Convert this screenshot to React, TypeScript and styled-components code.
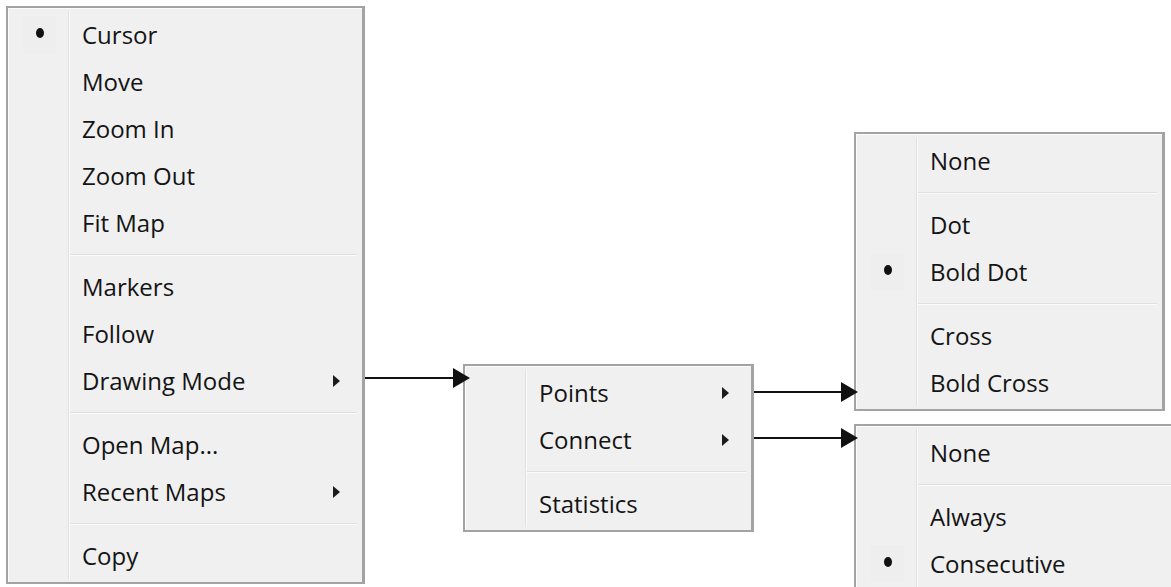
import React from "react";
import styled, { createGlobalStyle } from "styled-components";

const Global = createGlobalStyle`
  html, body { margin: 0; padding: 0; background: #ffffff; overflow: hidden; }
  #root { width: 1171px; height: 587px; }
`;

const Canvas = styled.div`
  position: relative;
  width: 1171px;
  height: 587px;
  overflow: hidden;
  background: #ffffff;
  font-family: "Open Sans", "Noto Sans", sans-serif;
`;

const GUTTER = 57;

const Menu = styled.div<{ $x: number; $y: number; $w: number }>`
  position: absolute;
  left: ${(p) => p.$x}px;
  top: ${(p) => p.$y}px;
  width: ${(p) => p.$w}px;
  box-sizing: border-box;
  background: #f0f0f0;
  border: 2px solid #a3a3a3;
  border-right-width: 3px;
  box-shadow: inset 1px 1px 0 #fbfbfb;
  padding: 3px;
  display: flex;
  flex-direction: column;

  &::before {
    content: "";
    position: absolute;
    left: ${GUTTER + 3}px;
    top: 3px;
    bottom: 3px;
    width: 1px;
    background: #e0e0e0;
    border-right: 1px solid #fbfbfb;
  }
`;

const Row = styled.div`
  display: grid;
  grid-template-columns: ${GUTTER}px 1fr 40px;
  align-items: center;
  height: 47px;
`;

const Check = styled.div<{ $on?: boolean }>`
  display: flex;
  align-items: center;
  justify-content: center;
  width: 33px;
  height: 37px;
  margin-left: 12px;
  border-radius: 2px;
  background: ${(p) => (p.$on ? "#eeeeee" : "transparent")};
`;

const Bullet = styled.span`
  display: block;
  width: 8px;
  height: 10px;
  border-radius: 50%;
  background: #111111;
  margin-top: -3px;
`;

const Label = styled.span`
  padding-left: 14px;
  font-size: 24px;
  font-weight: 500;
  color: #141414;
  white-space: nowrap;
`;

const SubArrow = styled.span`
  justify-self: end;
  margin-right: 19px;
  width: 0;
  height: 0;
  border-left: 7px solid #1c1c1c;
  border-top: 6px solid transparent;
  border-bottom: 6px solid transparent;
`;

const Separator = styled.div`
  height: 17px;
  display: flex;
  align-items: center;
  padding-left: ${GUTTER + 1}px;
  padding-right: 2px;

  &::after {
    content: "";
    flex: 1;
    height: 1px;
    background: #e0e0e0;
    border-bottom: 1px solid #fbfbfb;
  }
`;

const ArrowBox = styled.svg<{ $x: number; $y: number }>`
  position: absolute;
  left: ${(p) => p.$x}px;
  top: ${(p) => p.$y - 11}px;
  overflow: visible;
`;

type Item = { label?: string; sub?: boolean; on?: boolean; sep?: boolean };

const MenuList = ({ items }: { items: Item[] }) => (
  <>
    {items.map((it, i) =>
      it.sep ? (
        <Separator key={i} />
      ) : (
        <Row key={i}>
          <Check $on={it.on}>{it.on && <Bullet />}</Check>
          <Label>{it.label}</Label>
          {it.sub ? <SubArrow /> : <span />}
        </Row>
      )
    )}
  </>
);

const Arrow = ({ x, y, w }: { x: number; y: number; w: number }) => (
  <ArrowBox $x={x} $y={y} width={w} height={22} viewBox={`0 0 ${w} 22`}>
    <line x1={0} y1={11} x2={w - 14} y2={11} stroke="#111" strokeWidth={2} />
    <polygon points={`${w - 17},1 ${w},11 ${w - 17},21`} fill="#111" />
  </ArrowBox>
);

const mainItems: Item[] = [
  { label: "Cursor", on: true },
  { label: "Move" },
  { label: "Zoom In" },
  { label: "Zoom Out" },
  { label: "Fit Map" },
  { sep: true },
  { label: "Markers" },
  { label: "Follow" },
  { label: "Drawing Mode", sub: true },
  { sep: true },
  { label: "Open Map..." },
  { label: "Recent Maps", sub: true },
  { sep: true },
  { label: "Copy" },
];

const drawItems: Item[] = [
  { label: "Points", sub: true },
  { label: "Connect", sub: true },
  { sep: true },
  { label: "Statistics" },
];

const pointItems: Item[] = [
  { label: "None" },
  { sep: true },
  { label: "Dot" },
  { label: "Bold Dot", on: true },
  { sep: true },
  { label: "Cross" },
  { label: "Bold Cross" },
];

const connectItems: Item[] = [
  { label: "None" },
  { sep: true },
  { label: "Always" },
  { label: "Consecutive", on: true },
];

export default function App() {
  return (
    <>
      <Global />
      <Canvas>
        <Menu $x={6} $y={6} $w={359}>
          <MenuList items={mainItems} />
        </Menu>
        <Menu $x={463} $y={364} $w={291}>
          <MenuList items={drawItems} />
        </Menu>
        <Menu $x={854} $y={132} $w={311}>
          <MenuList items={pointItems} />
        </Menu>
        <Menu $x={854} $y={424} $w={340}>
          <MenuList items={connectItems} />
        </Menu>
        <Arrow x={365} y={378} w={105} />
        <Arrow x={754} y={392} w={104} />
        <Arrow x={754} y={438} w={104} />
      </Canvas>
    </>
  );
}
